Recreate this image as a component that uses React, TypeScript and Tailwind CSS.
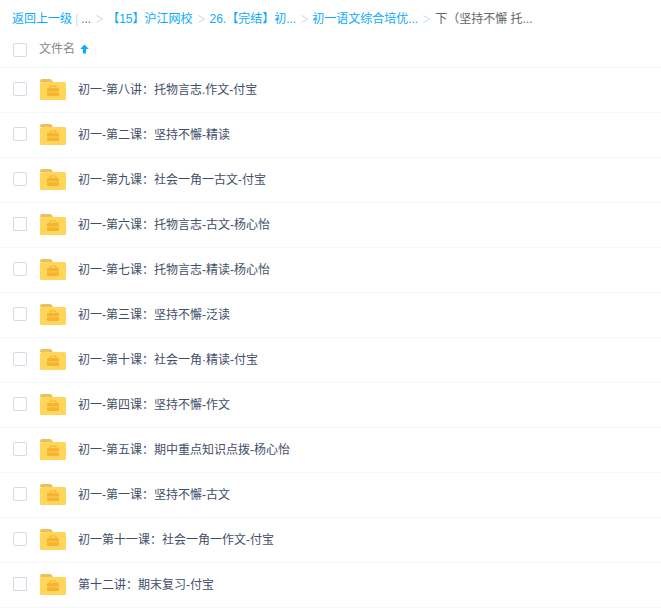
const files = [
  "初一-第八讲\uFF1A托物言志.作文-付宝",
  "初一-第二课\uFF1A坚持不懈-精读",
  "初一-第九课\uFF1A社会一角一古文-付宝",
  "初一-第六课\uFF1A托物言志-古文-杨心怡",
  "初一-第七课\uFF1A托物言志-精读-杨心怡",
  "初一-第三课\uFF1A坚持不懈-泛读",
  "初一-第十课\uFF1A社会一角·精读-付宝",
  "初一-第四课\uFF1A坚持不懈-作文",
  "初一-第五课\uFF1A期中重点知识点拨-杨心怡",
  "初一-第一课\uFF1A坚持不懈-古文",
  "初一第十一课\uFF1A社会一角一作文-付宝",
  "第十二讲\uFF1A期末复习-付宝",
]

const crumbs = [
  { label: "【15】沪江网校", gap: "ml-[5px] mr-[5px]" },
  { label: "26.【完结】初...", gap: "ml-[5px] mr-[4px]" },
  { label: "初一语文综合培优...", gap: "ml-[5px] mr-[5px]" },
]

function FolderIcon() {
  return (
    <svg width="26" height="21" viewBox="0 0 26 21" className="block shrink-0">
      <path d="M0 2a2 2 0 0 1 2-2h8a2 2 0 0 1 1.6.8L13 3H0z" fill="#e9c25f" />
      <rect x="0" y="3" width="26" height="18" rx="1.5" fill="#ffd659" />
      <rect x="7" y="9" width="12" height="8" rx="1" fill="#f5b32f" />
      <path d="M10 9V8a1 1 0 0 1 1-1h4a1 1 0 0 1 1 1v1" fill="none" stroke="#f5b32f" strokeWidth="1.2" />
      <rect x="7" y="12.5" width="12" height="0.8" fill="#ffd659" />
    </svg>
  )
}

function Checkbox() {
  return <span className="block w-[14px] h-[14px] shrink-0 rounded-[2px] border border-[#d5dbe6] bg-white" />
}

function Chevron() {
  return (
    <svg width="7" height="8" viewBox="0 0 7 8" className="block shrink-0">
      <path d="M0.5 0.5 L6.5 4 L0.5 7.5" fill="none" stroke="#c4d8f4" strokeWidth="1" />
    </svg>
  )
}

function App() {
  return (
    <div className="w-[661px] h-[608px] overflow-hidden bg-white text-[12px] font-['Liberation_Sans','Noto_Sans_CJK_SC',sans-serif]">
      <div className="flex items-center h-[37px] pl-[12px] text-[#09aaff] whitespace-nowrap">
        <span>返回上一级</span>
        <span className="ml-[3px] text-[#c4d8f4]">|</span>
        <span className="ml-[3px] text-[#666]">...</span>
        <span className="ml-[5px] mr-[4px]"><Chevron /></span>
        {crumbs.map((c) => (
          <span key={c.label} className="flex items-center">
            <span>{c.label}</span>
            <span className={c.gap}><Chevron /></span>
          </span>
        ))}
        <span className="text-[#666]">下{"\uFF08"}坚持不懈 托...</span>
      </div>
      <div className="flex items-center h-[31px] pl-[13px] pb-[4px] border-b border-[#f4f4f6]">
        <Checkbox />
        <span className="ml-[12px] mb-[2px] text-[#888]">文件名</span>
        <svg width="9" height="10" viewBox="0 0 9 10" className="ml-[5px] mb-[2px]">
          <path d="M4.5 0.5 L8.8 5 H6 V9.5 H3 V5 H0.2 Z" fill="#09aaff" />
        </svg>
      </div>
      <ul>
        {files.map((name) => (
          <li key={name} className="flex items-center h-[45px] pl-[13px] border-b border-[#f3f6fb]">
            <span className="mb-[2px]"><Checkbox /></span>
            <span className="ml-[13px] mb-[2px]"><FolderIcon /></span>
            <span className="ml-[12px] text-[#424e67] whitespace-nowrap">{name}</span>
          </li>
        ))}
      </ul>
    </div>
  )
}

export default App
